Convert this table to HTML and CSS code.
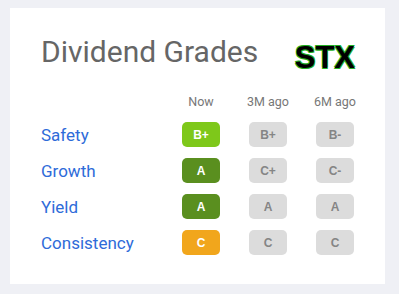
FILE: index.html
```html
<!DOCTYPE html>
<html>
<head>
<meta charset="utf-8">
<link rel="stylesheet" href="styles.css">
</head>
<body>
<div class="card">
  <div class="head">
    <h1 class="title">Dividend Grades</h1>
    <div class="ticker">STX</div>
  </div>
  <div class="grid">
    <div></div>
    <div class="colhead"><span>Now</span></div>
    <div class="colhead"><span>3M ago</span></div>
    <div class="colhead"><span>6M ago</span></div>

    <div class="label">Safety</div>
    <div class="badge lime">B+</div>
    <div class="badge gray">B+</div>
    <div class="badge gray">B-</div>

    <div class="label">Growth</div>
    <div class="badge green">A</div>
    <div class="badge gray">C+</div>
    <div class="badge gray">C-</div>

    <div class="label">Yield</div>
    <div class="badge green">A</div>
    <div class="badge gray">A</div>
    <div class="badge gray">A</div>

    <div class="label">Consistency</div>
    <div class="badge orange">C</div>
    <div class="badge gray">C</div>
    <div class="badge gray">C</div>
  </div>
</div>
</body>
</html>
```

FILE: styles.css
```css
html, body {
  margin: 0;
  padding: 0;
  background: #eff0f5;
}
body {
  width: 399px;
  height: 294px;
  overflow: hidden;
}
.card {
  margin: 8px 0 0 10px;
  width: 375px;
  height: 276px;
  box-sizing: border-box;
  background: #ffffff;
  padding: 26px 31px 0 31px;
  font-family: Roboto, "Liberation Sans", sans-serif;
}
.head {
  display: flex;
  justify-content: space-between;
  align-items: flex-start;
  height: 36px;
}
.title {
  margin: 0;
  font-weight: 400;
  font-size: 30px;
  line-height: 36px;
  color: #666666;
}
.ticker {
  margin-top: 8px;
  margin-right: -1px;
  font-family: "Liberation Sans", Arial, sans-serif;
  font-weight: 700;
  font-size: 31px;
  line-height: 31px;
  color: #000000;
  text-shadow: 0.7px 0.7px 0 #22b022, -0.7px -0.7px 0 #22b022, 0.7px -0.7px 0 #22b022, -0.7px 0.7px 0 #22b022;
}
.grid {
  margin-top: 24px;
  display: grid;
  grid-template-columns: 1fr 38px 38px 38px;
  grid-template-rows: 17px repeat(4, 25px);
  column-gap: 29px;
  row-gap: 11px;
}
.colhead {
  display: flex;
  justify-content: center;
  font-size: 12.5px;
  line-height: 15px;
  color: #777777;
  white-space: nowrap;
}
.label {
  align-self: center;
  font-size: 17px;
  color: #2e6bd9;
}
.badge {
  display: flex;
  align-items: center;
  justify-content: center;
  border-radius: 5px;
  font-family: "Liberation Sans", Arial, sans-serif;
  font-weight: 700;
  font-size: 12px;
  color: #ffffff;
}
.lime { background: #7ec81a; }
.green { background: #5a8f1f; }
.orange { background: #f1a61c; }
.gray { background: #dcdcdc; color: #858585; }
```
